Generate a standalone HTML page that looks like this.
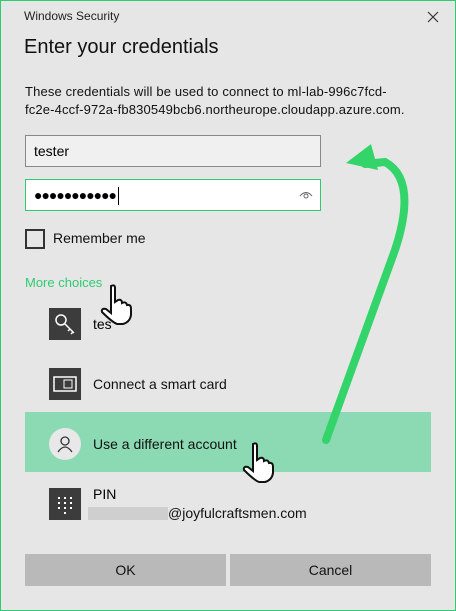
<!DOCTYPE html>
<html><head><meta charset="utf-8"><style>
*{margin:0;padding:0;box-sizing:border-box}
body{width:456px;height:611px;background:#e6e6e6;font-family:"Liberation Sans",sans-serif;color:#000;position:relative;overflow:hidden}
.a{position:absolute;white-space:nowrap}
.icon{position:absolute;left:49px;width:32px;height:32px;background:#3c3c3c}
.btn{position:absolute;top:554px;height:32px;background:#b9b9b9;font-size:14px;text-align:center;line-height:32px;color:#111}
</style></head><body>
<div class="a" style="left:0;top:0;width:456px;height:611px;border:1px solid #2ecc71"></div>
<div class="a" style="left:24px;top:9px;font-size:12px;color:#222">Windows Security</div>
<svg class="a" style="left:427px;top:11px" width="12" height="12"><path d="M1 1L11 11M11 1L1 11" stroke="#333" stroke-width="1.2"/></svg>
<div class="a" style="left:24px;top:36px;font-size:20px;color:#111">Enter your credentials</div>
<div class="a" style="left:25px;top:83px;font-size:13px;line-height:18px;color:#111;letter-spacing:0.15px">These credentials will be used to connect to ml-lab-996c7fcd-<br>fc2e-4ccf-972a-fb830549bcb6.northeurope.cloudapp.azure.com.</div>
<div class="a" style="left:25px;top:135px;width:296px;height:32px;background:#f0f0f0;border:1px solid #888;font-size:14px;line-height:30px;padding-left:8px">tester</div>
<div class="a" style="left:25px;top:179px;width:296px;height:32px;background:#fff;border:1px solid #2ecc71;font-size:14px;line-height:30px;padding-left:8px;letter-spacing:-1px">●●●●●●●●●●●<span style="display:inline-block;width:1px;height:18px;background:#000;vertical-align:middle;margin-left:2px"></span></div>
<svg class="a" style="left:299px;top:189px" width="14" height="10"><path d="M1 7Q7 0 13 7" fill="none" stroke="#666"/><circle cx="7" cy="7" r="2" fill="none" stroke="#666"/></svg>
<div class="a" style="left:25px;top:229px;width:20px;height:20px;border:2px solid #333"></div>
<div class="a" style="left:53px;top:230px;font-size:14px;color:#111">Remember me</div>
<div class="a" style="left:25px;top:275px;font-size:13px;color:#2ecc71">More choices</div>
<div class="icon" style="top:308px"><svg width="32" height="32"><circle cx="12" cy="12" r="5" fill="none" stroke="#fff" stroke-width="1.5"/><path d="M16 16L25 25M21 21L19 23M24 24L22 26" stroke="#fff" stroke-width="1.5"/></svg></div>
<div class="a" style="left:93px;top:316px;font-size:14px">tes</div>
<div class="icon" style="top:368px"><svg width="32" height="32"><rect x="5" y="9" width="22" height="14" fill="none" stroke="#fff" stroke-width="1.5"/><rect x="15" y="12" width="8" height="8" fill="none" stroke="#fff"/></svg></div>
<div class="a" style="left:93px;top:376px;font-size:14px;color:#111">Connect a smart card</div>
<div class="a" style="left:25px;top:412px;width:406px;height:60px;background:#8bdab3"></div>
<div class="a" style="left:49px;top:428px;width:32px;height:32px;border-radius:50%;background:#e8e8e8"><svg width="32" height="32"><circle cx="16" cy="13" r="4" fill="none" stroke="#333" stroke-width="1.3"/><path d="M9 24Q16 14 23 24" fill="none" stroke="#333" stroke-width="1.3"/></svg></div>
<div class="a" style="left:93px;top:436px;font-size:14px;color:#111">Use a different account</div>
<div class="icon" style="top:488px"><svg width="32" height="32" fill="#fff"><rect x="9" y="9" width="2" height="2"/><rect x="15" y="9" width="2" height="2"/><rect x="21" y="9" width="2" height="2"/><rect x="9" y="14" width="2" height="2"/><rect x="15" y="14" width="2" height="2"/><rect x="21" y="14" width="2" height="2"/><rect x="9" y="19" width="2" height="2"/><rect x="15" y="19" width="2" height="2"/><rect x="21" y="19" width="2" height="2"/><rect x="15" y="24" width="2" height="2"/></svg></div>
<div class="a" style="left:93px;top:486px;font-size:14px">PIN</div>
<div class="a" style="left:88px;top:507px;width:80px;height:13px;background:#cfcfcf"></div>
<div class="a" style="left:168px;top:505px;font-size:14px;color:#111">@joyfulcraftsmen.com</div>
<div class="btn" style="left:25px;width:201px">OK</div>
<div class="btn" style="left:230px;width:201px">Cancel</div>
<svg class="a" style="left:0;top:0" width="456" height="611">
<path d="M326 440L395 250Q418 180 385 162L365 164" fill="none" stroke="#33d46a" stroke-width="8" stroke-linecap="round"/>
<path d="M346 163L371 144L378 170Z" fill="#33d46a"/>
</svg>
<svg class="a" style="left:98px;top:282px" width="40" height="46"><path d="M13 4Q17 2 17 6L17 20L20 18Q24 17 24 21Q28 19 29 23Q33 22 33 27L33 33Q32 40 25 42L19 42Q14 40 4 30Q3 26 8 27L13 31Z" fill="#fff" stroke="#111" stroke-width="2"/></svg>
<svg class="a" style="left:240px;top:440px" width="40" height="46"><path d="M13 4Q17 2 17 6L17 20L20 18Q24 17 24 21Q28 19 29 23Q33 22 33 27L33 33Q32 40 25 42L19 42Q14 40 4 30Q3 26 8 27L13 31Z" fill="#fff" stroke="#111" stroke-width="2"/></svg>
</body></html>
